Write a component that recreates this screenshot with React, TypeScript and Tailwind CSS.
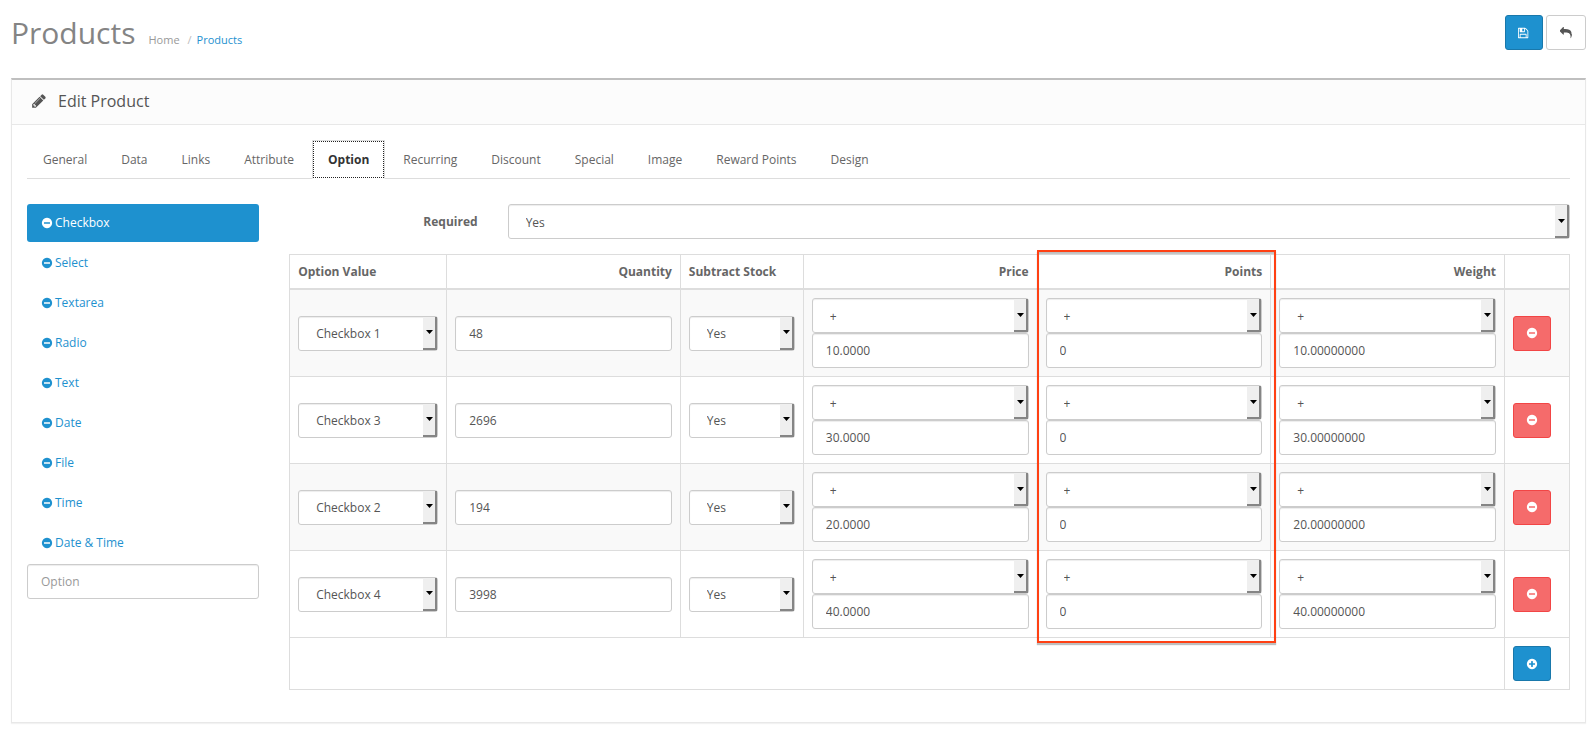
import React from 'react';

const ICONS = {
  save: 'M256 1536h768v-384h-768v384zm896 0h128v-896q0-14-10-38.5t-20-34.5l-281-281q-10-10-34-20t-39-10v416q0 40-28 68t-68 28h-576q-40 0-68-28t-28-68v-416h-128v1280h128v-416q0-40 28-68t68-28h832q40 0 68 28t28 68v416zm-384-928v-320q0-13-9.5-22.5t-22.5-9.5h-192q-13 0-22.5 9.5t-9.5 22.5v320q0 13 9.5 22.5t22.5 9.5h192q13 0 22.5-9.5t9.5-22.5zm640 32v928q0 40-28 68t-68 28h-1344q-40 0-68-28t-28-68v-1344q0-40 28-68t68-28h928q40 0 88 20t76 48l280 280q28 28 48 76t20 88z',
  reply:
    'M1792 1120q0 166-127 451-3 7-10.5 24t-13.5 30-13 22q-12 17-28 17-15 0-23.5-10t-8.5-25q0-9 2.5-26.5t2.5-23.5q5-68 5-123 0-112-19.5-200.5t-54-153.5-89-112-117-80.5-146-53.5-165.5-28-192-9h-224v256q0 26-19 45t-45 19-45-19l-512-512q-19-19-19-45t19-45l512-512q19-19 45-19t45 19 19 45v256h224q713 0 875 403 53 134 53 333z',
  pencil:
    'M491 1536l91-91-235-235-91 91v107h128v128h107zm523-928q0-22-22-22-10 0-17 7l-542 542q-7 7-7 17 0 22 22 22 10 0 17-7l542-542q7-7 7-17zm-54-192l416 416-832 832h-416v-416zm683 96q0 53-37 90l-166 166-416-416 166-165q36-38 90-38 53 0 91 38l235 234q37 39 37 91z',
  minus:
    'M1344 960v-128q0-26-19-45t-45-19h-768q-26 0-45 19t-19 45v128q0 26 19 45t45 19h768q26 0 45-19t19-45zm320-64q0 209-103 385.5t-279.5 279.5-385.5 103-385.5-103-279.5-279.5-103-385.5 103-385.5 279.5-279.5 385.5-103 385.5 103 279.5 279.5 103 385.5z',
  plus: 'M1344 960v-128q0-26-19-45t-45-19h-256v-256q0-26-19-45t-45-19h-128q-26 0-45 19t-19 45v256h-256q-26 0-45 19t-19 45v128q0 26 19 45t45 19h256v256q0 26 19 45t45 19h128q26 0 45-19t19-45v-256h256q26 0 45-19t19-45zm320-64q0 209-103 385.5t-279.5 279.5-385.5 103-385.5-103-279.5-279.5-103-385.5 103-385.5 279.5-279.5 385.5-103 385.5 103 279.5 279.5 103 385.5z',
};

interface IconProps {
  name: keyof typeof ICONS;
  viewBox?: string;
  className?: string;
}

const Icon: React.FC<IconProps> = ({ name, viewBox = '0 0 1792 1792', className = 'w-3 h-3' }) => (
  <svg viewBox={viewBox} fill="currentColor" className={className} aria-hidden="true">
    <path d={ICONS[name]} />
  </svg>
);

interface SelectProps {
  id?: string;
  label?: string;
  options: string[];
  value: string;
}

const Select: React.FC<SelectProps> = ({ id, label, options, value }) => (
  <div className="relative">
    <select
      id={id}
      aria-label={label}
      defaultValue={value}
      className="block w-full h-[35px] appearance-none rounded-[3px] border border-[#ccc] bg-white pl-[17px] pr-5 pt-0.5 text-xs text-[#555] shadow-[inset_0_1px_1px_rgba(0,0,0,0.075)]"
    >
      {options.map(option => (
        <option key={option}>{option}</option>
      ))}
    </select>
    <span className="pointer-events-none absolute inset-y-px right-px flex w-[14px] items-center justify-center border-r-2 border-b-2 border-[#858585] bg-[#efefef] pl-px">
      <svg viewBox="0 0 7 4" className="w-[7px] h-1" aria-hidden="true">
        <path d="M0 0h7L3.500 4z" />
      </svg>
    </span>
  </div>
);

const Input: React.FC<{ label: string; value?: string; placeholder?: string }> = ({ label, value, placeholder }) => (
  <input
    type="text"
    aria-label={label}
    defaultValue={value}
    placeholder={placeholder}
    className="block w-full h-[35px] rounded-[3px] border border-[#ccc] bg-white px-[13px] text-xs text-[#555] placeholder:text-[#999] shadow-[inset_0_1px_1px_rgba(0,0,0,0.075)]"
  />
);

const tabs = ['General', 'Data', 'Links', 'Attribute', 'Option', 'Recurring', 'Discount', 'Special', 'Image', 'Reward Points', 'Design'];

const productOptions = ['Checkbox', 'Select', 'Textarea', 'Radio', 'Text', 'Date', 'File', 'Time', 'Date & Time'];

const checkboxes = ['Checkbox 1', 'Checkbox 2', 'Checkbox 3', 'Checkbox 4'];

const rows = [
  { name: 'Checkbox 1', quantity: '48', price: '10.0000', points: '0', weight: '10.00000000' },
  { name: 'Checkbox 3', quantity: '2696', price: '30.0000', points: '0', weight: '30.00000000' },
  { name: 'Checkbox 2', quantity: '194', price: '20.0000', points: '0', weight: '20.00000000' },
  { name: 'Checkbox 4', quantity: '3998', price: '40.0000', points: '0', weight: '40.00000000' },
];

const th = 'relative border border-[#ddd] border-b-2 p-2 font-bold';
const td = 'border border-[#ddd] p-2 align-middle';

export default function App() {
  return (
    <div className="bg-white pl-[11px] pr-[7px] pb-2.5 text-xs leading-[17px] text-[#666] font-['Open_Sans',sans-serif]">
      {/* Page header */}
      <header className="flex items-start justify-between pt-[15px]">
        <div className="flex items-baseline gap-[13px]">
          <h1 className="text-[30px] leading-9 text-[#848484]">Products</h1>
          <nav aria-label="Breadcrumb" className="flex gap-[5px] text-[11px]">
            <a href="#home" className="text-[#999]">Home</a>
            <span className="pl-[3px] text-[#bbb]">/</span>
            <a href="#products" className="text-[#1e91cf]">Products</a>
          </nav>
        </div>
        <div className="flex gap-[3px]">
          <button
            type="button"
            aria-label="Save"
            className="flex h-[35px] w-[38px] items-center justify-center rounded-[3px] border border-[#1978ab] bg-[#1e91cf] text-white"
          >
            <Icon name="save" viewBox="-128 0 1792 1792" />
          </button>
          <button
            type="button"
            aria-label="Cancel"
            className="flex h-[35px] w-10 items-center justify-center rounded-[3px] border border-[#ccc] bg-white text-[#555]"
          >
            <Icon name="reply" />
          </button>
        </div>
      </header>

      {/* Panel */}
      <main className="mt-[27px] border border-t-2 border-[#e8e8e8] border-t-[#bfbfbf] shadow-[0_1px_1px_rgba(0,0,0,0.05)]">
        <div className="flex items-center gap-[11px] border-b border-[#e8e8e8] bg-[#fcfcfc] px-[19px] pt-[11px] pb-[13px] text-[#555]">
          <Icon name="pencil" className="w-4 h-4" />
          <h2 className="text-base leading-5">Edit Product</h2>
        </div>

        <div className="px-[15px] pt-[15px] pb-8">
          <ul className="flex gap-0.5 border-b border-[#ddd]">
            {tabs.map(tab => (
              <li key={tab} className="-mb-px">
                {tab === 'Option' ? (
                  <a
                    href="#option"
                    className="block border border-b-white border-[#ddd] bg-white px-[15px] py-[10px] font-bold text-[#333] outline-1 outline-dotted -outline-offset-2 outline-[#222]"
                  >
                    {tab}
                  </a>
                ) : (
                  <a href="#tab" className="block border border-transparent px-[15px] py-[10px]">
                    {tab}
                  </a>
                )}
              </li>
            ))}
          </ul>

          <div className="-mx-[15px] mt-[25px] flex">
            {/* Product options */}
            <aside className="w-1/6 px-[15px]">
              <ul>
                {productOptions.map((option, index) => (
                  <li key={option} className="pb-0.5">
                    <a
                      href="#product-option"
                      className={`flex h-[38px] items-center gap-0.5 rounded-[3px] px-3.5 pb-px ${
                        index === 0 ? 'bg-[#1e91cf] text-white' : 'text-[#1e91cf]'
                      }`}
                    >
                      <Icon name="minus" />
                      {option}
                    </a>
                  </li>
                ))}
              </ul>
              <Input label="Option" placeholder="Option" />
            </aside>

            {/* Option values */}
            <section className="w-5/6 px-[15px]">
              <div className="-mx-[15px] mb-[15px] flex">
                <label htmlFor="required" className="w-1/6 px-[15px] pt-[9px] text-right font-bold">
                  Required
                </label>
                <div className="w-5/6 px-[15px]">
                  <Select id="required" options={['Yes', 'No']} value="Yes" />
                </div>
              </div>

              <table className="w-full table-fixed border-collapse">
                <colgroup>
                  <col className="w-[157px]" />
                  <col />
                  <col className="w-[123px]" />
                  <col />
                  <col />
                  <col />
                  <col className="w-[65px]" />
                </colgroup>
                <thead>
                  <tr>
                    <th className={`${th} text-left`}>Option Value</th>
                    <th className={`${th} text-right`}>Quantity</th>
                    <th className={`${th} text-left whitespace-nowrap`}>Subtract Stock</th>
                    <th className={`${th} text-right`}>Price</th>
                    <th className={`${th} text-right`}>
                      Points
                      {/* Highlight around the whole column */}
                      <span className="pointer-events-none absolute -top-[5px] -left-px -right-1.5 z-10 h-[393px] border-2 border-[#ff4013] shadow-[0_2px_1px_rgba(0,0,0,0.25),inset_0_2px_1px_rgba(0,0,0,0.25)]" />
                    </th>
                    <th className={`${th} text-right`}>Weight</th>
                    <th className={th} />
                  </tr>
                </thead>
                <tbody>
                  {rows.map(row => (
                    <tr key={row.name} className="odd:bg-[#f9f9f9]">
                      <td className={td}>
                        <Select label="Option Value" options={checkboxes} value={row.name} />
                      </td>
                      <td className={td}>
                        <Input label="Quantity" value={row.quantity} />
                      </td>
                      <td className={td}>
                        <Select label="Subtract Stock" options={['Yes', 'No']} value="Yes" />
                      </td>
                      <td className={td}>
                        <Select label="Price prefix" options={['+', '-']} value="+" />
                        <Input label="Price" value={row.price} />
                      </td>
                      <td className={td}>
                        <Select label="Points prefix" options={['+', '-']} value="+" />
                        <Input label="Points" value={row.points} />
                      </td>
                      <td className={td}>
                        <Select label="Weight prefix" options={['+', '-']} value="+" />
                        <Input label="Weight" value={row.weight} />
                      </td>
                      <td className={td}>
                        <button
                          type="button"
                          aria-label="Remove"
                          className="flex h-[35px] w-[38px] items-center justify-center rounded-[3px] border border-[#f24545] bg-[#f56b6b] text-white"
                        >
                          <Icon name="minus" />
                        </button>
                      </td>
                    </tr>
                  ))}
                </tbody>
                <tfoot>
                  <tr>
                    <td colSpan={6} className={td} />
                    <td className={td}>
                      <button
                        type="button"
                        aria-label="Add Option Value"
                        className="flex h-[35px] w-[38px] items-center justify-center rounded-[3px] border border-[#1978ab] bg-[#1e91cf] text-white"
                      >
                        <Icon name="plus" />
                      </button>
                    </td>
                  </tr>
                </tfoot>
              </table>
            </section>
          </div>
        </div>
      </main>
    </div>
  );
}
